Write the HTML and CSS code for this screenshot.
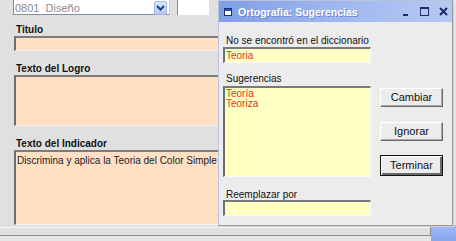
FILE: index.html
```html
<!DOCTYPE html>
<html lang="es">
  <head>
    <title>Ortografía: Sugerencias</title>
    <link rel="stylesheet" href="styles.css">
  </head>
  <body>
    <div class="form">
      <div class="combo-row">
        <div class="combo">
          <span class="combo-text">0801&nbsp; Diseño</span>
          <span class="combo-btn">
            <svg width="9" height="6" viewBox="0 0 9 6"><path d="M1 1 L4.5 4.5 L8 1" fill="none" stroke="#1d3b8c" stroke-width="2"/></svg>
          </span>
        </div>
        <div class="code-box"></div>
      </div>
      <div class="field-label">Titulo</div>
      <div class="field field-line"></div>
      <div class="field-label">Texto del Logro</div>
      <div class="field field-logro"></div>
      <div class="field-label">Texto del Indicador</div>
      <div class="field field-indicador">Discrimina y aplica la Teoria del Color Simple</div>
      <div class="form-foot"></div>
    </div>

    <div class="dialog">
      <div class="titlebar">
        <svg class="title-icon" width="8" height="8" viewBox="0 0 8 8">
          <rect x="0.5" y="0.5" width="7" height="7" fill="#fff" stroke="#1b2f78"/>
          <rect x="1" y="1" width="6" height="2" fill="#2a4fb8"/>
        </svg>
        <span class="title-text">Ortografia: Sugerencias</span>
        <span class="title-controls">
          <svg width="8" height="8" viewBox="0 0 8 8"><rect x="1" y="6" width="5" height="2" fill="#1c2c66"/></svg>
          <svg width="9" height="9" viewBox="0 0 9 9"><rect x="0.5" y="0.5" width="8" height="8" fill="none" stroke="#1c2c66"/><rect x="0.5" y="0.5" width="8" height="1.5" fill="#1c2c66"/></svg>
          <svg width="9" height="9" viewBox="0 0 9 9"><path d="M1 1 L8 8 M8 1 L1 8" stroke="#1c2c66" stroke-width="2"/></svg>
        </span>
      </div>
      <div class="dialog-body">
        <div class="dialog-main">
          <div class="dlg-label">No se encontró en el diccionario</div>
          <div class="dlg-input">Teoria</div>
          <div class="dlg-label dlg-label-gap">Sugerencias</div>
          <ul class="suggest-list">
            <li>Teoría</li>
            <li>Teoriza</li>
          </ul>
          <div class="dlg-label dlg-label-replace">Reemplazar por</div>
          <div class="dlg-input"></div>
        </div>
        <div class="dialog-buttons">
          <div class="btn">Cambiar</div>
          <div class="btn">Ignorar</div>
          <div class="btn btn-default">Terminar</div>
        </div>
      </div>
    </div>
  </body>
</html>
```

FILE: styles.css
```css
html {
  font-family: "Liberation Sans", Arial, sans-serif;
}

body {
  margin: 0;
  width: 456px;
  height: 241px;
  overflow: hidden;
  position: relative;
  background: linear-gradient(to bottom, #a2baf5, #88a6ee) no-repeat 431px 225px / 25px 16px, #e6e6e6;
}

.form {
  width: 431px;
  height: 236px;
  background-color: #e0e0e0;
  border-right: 1px solid #8c8c8c;
  border-bottom: 1px solid #8c8c8c;
  padding-left: 14px;
  box-sizing: border-box;
  display: flex;
  flex-direction: column;
}

.combo-row {
  display: flex;
  column-gap: 7px;
  margin-top: -2px;
  margin-left: -1px;
}

.combo {
  width: 157px;
  height: 17px;
  box-sizing: border-box;
  background-color: #fff;
  border: 1px solid #7f8fa9;
  border-right-color: #c6d2e3;
  display: flex;
  align-items: center;
  justify-content: space-between;
}

.combo-text {
  font-size: 11px;
  color: #8a8a8a;
  padding-left: 1px;
  padding-top: 2px;
}

.combo-btn {
  width: 13px;
  height: 14px;
  margin-right: 2px;
  margin-top: 2px;
  background: linear-gradient(to bottom, #d8e4fb, #b4c8f4);
  border: 1px solid #a5b9e4;
  border-radius: 2px;
  box-sizing: border-box;
  display: flex;
  align-items: center;
  justify-content: center;
}

.code-box {
  width: 32px;
  height: 17px;
  box-sizing: border-box;
  background-color: #fff;
  border-left: 1px solid #8a8a8a;
}

.field-label {
  font-size: 10px;
  font-weight: bold;
  line-height: 13px;
  color: #111;
  margin-top: 11px;
  padding-left: 2px;
}

.combo-row + .field-label {
  margin-top: 8px;
}

.field {
  width: 240px;
  box-sizing: border-box;
  background-color: #ffe0c4;
  border-top: 2px solid #7c7c7c;
  border-left: 2px solid #6e6e6e;
  border-bottom: 1px solid #f4f4f4;
  font-size: 10px;
  color: #222;
}

.field-line {
  height: 15px;
}

.field-logro {
  height: 51px;
}

.field-indicador {
  height: 75px;
  padding: 3px 0 0 1px;
  line-height: 12px;
  white-space: nowrap;
}

.form-foot {
  margin-top: 2px;
  margin-left: -14px;
  border-top: 1px solid #f6f6f6;
}

/* dialog window */

.dialog {
  position: absolute;
  left: 218px;
  top: 0;
  width: 235px;
  height: 226px;
  box-sizing: border-box;
  background-color: #ececec;
  border: 1px solid #b8c4dc;
  border-right-color: #9a9a9a;
  border-bottom-color: #9a9a9a;
  box-shadow: 1px 1px 0 #cfcfcf;
}

.titlebar {
  height: 21px;
  background: linear-gradient(to right, #7f9ee4, #9db5ee 45%, #b6c9f3);
  display: flex;
  align-items: center;
  padding-left: 5px;
}

.title-icon {
  margin-right: 6px;
}

.title-text {
  font-size: 10.5px;
  font-weight: bold;
  color: #fff;
  text-shadow: 1px 1px 0 #6d86c8;
}

.title-controls {
  margin-left: auto;
  margin-right: 4px;
  display: flex;
  align-items: center;
  column-gap: 10px;
}

.dialog-body {
  display: flex;
  padding-left: 4px;
}

.dialog-main {
  width: 148px;
  padding-top: 13px;
}

.dlg-label {
  font-size: 10px;
  line-height: 12px;
  color: #111;
  padding-left: 3px;
  white-space: nowrap;
}

.dlg-label-gap {
  margin-top: 10px;
}

.dlg-label-replace {
  margin-top: 12px;
  line-height: 11px;
}

.dlg-input,
.suggest-list {
  box-sizing: border-box;
  background-color: #ffffc4;
  border-top: 2px solid #7a7a7a;
  border-left: 2px solid #6e6e6e;
  border-bottom: 1px solid #fafafa;
  border-right: 1px solid #fafafa;
}

.dlg-input {
  height: 16px;
  font-size: 10px;
  line-height: 13px;
  color: #e8321c;
  padding-left: 1px;
}

.suggest-list {
  list-style: none;
  margin: 1px 0 0 0;
  padding: 1px 0 0 1px;
  height: 91px;
  font-size: 10px;
  line-height: 10px;
  color: #e8321c;
}

.dialog-buttons {
  margin-left: 9px;
  padding-top: 66px;
  display: flex;
  flex-direction: column;
  row-gap: 15px;
}

.btn {
  width: 63px;
  height: 19px;
  box-sizing: border-box;
  background-color: #ececec;
  border-top: 1px solid #fff;
  border-left: 1px solid #fff;
  border-right: 1px solid #6a6a6a;
  border-bottom: 1px solid #6a6a6a;
  box-shadow: inset -1px -1px 0 #a8a8a8;
  font-size: 11px;
  line-height: 17px;
  text-align: center;
  color: #111;
}

.btn-default {
  height: 21px;
  margin-top: -1px;
  border: 1px solid #111;
  box-shadow: inset 1px 1px 0 #fff, inset -2px -2px 0 #6a6a6a;
  line-height: 18px;
}
```
